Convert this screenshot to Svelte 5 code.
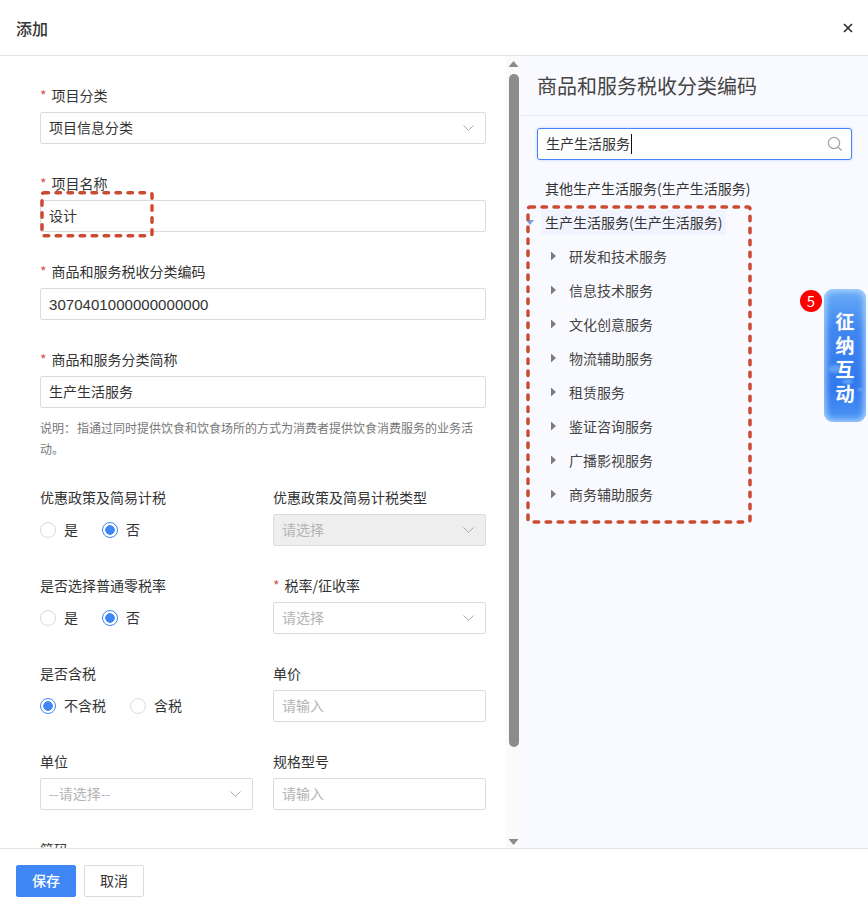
<script>
  const categories = ['研发和技术服务', '信息技术服务', '文化创意服务', '物流辅助服务', '租赁服务', '鉴证咨询服务', '广播影视服务', '商务辅助服务'];
</script>

{#snippet chevron()}
  <svg class="chevron" width="11" height="6" viewBox="0 0 11 6"><path d="M.5 .5 5.500 5.300 10.500 .5" fill="none" stroke="#a8a8a8" stroke-width="1"/></svg>
{/snippet}

{#snippet radio(text, on)}
  <span class="radio-item">
    <span class="radio" class:on></span>
    <span class="radio-text">{text}</span>
  </span>
{/snippet}

<div class="dialog">
  <header class="head">
    <span class="head-title">添加</span>
    <svg class="close" width="10" height="10" viewBox="0 0 10 10"><path d="M1 1 9 9M9 1 1 9" stroke="#222" stroke-width="1.5"/></svg>
  </header>

  <div class="body">
    <div class="form-pane">
      <form class="form">
        <div class="item">
          <div class="label"><i>*</i>项目分类</div>
          <div class="input">项目信息分类{@render chevron()}</div>
        </div>
        <div class="item">
          <div class="label"><i>*</i>项目名称</div>
          <div class="input">设计</div>
        </div>
        <div class="item">
          <div class="label"><i>*</i>商品和服务税收分类编码</div>
          <div class="input digits">3070401000000000000</div>
        </div>
        <div class="item with-help">
          <div class="label"><i>*</i>商品和服务分类简称</div>
          <div class="input">生产生活服务</div>
          <p class="help">说明：<span class="help-body">指通过同时提供饮食和饮食场所的方式为消费者提供饮食消费服务的业务活动。</span></p>
        </div>

        <div class="columns">
          <div class="item">
            <div class="label">优惠政策及简易计税</div>
            <div class="radios">{@render radio('是', false)}{@render radio('否', true)}</div>
          </div>
          <div class="item">
            <div class="label">优惠政策及简易计税类型</div>
            <div class="input disabled placeholder">请选择{@render chevron()}</div>
          </div>
          <div class="item">
            <div class="label">是否选择普通零税率</div>
            <div class="radios">{@render radio('是', false)}{@render radio('否', true)}</div>
          </div>
          <div class="item">
            <div class="label"><i>*</i>税率/征收率</div>
            <div class="input placeholder">请选择{@render chevron()}</div>
          </div>
          <div class="item">
            <div class="label">是否含税</div>
            <div class="radios">{@render radio('不含税', true)}{@render radio('含税', false)}</div>
          </div>
          <div class="item">
            <div class="label">单价</div>
            <div class="input placeholder">请输入</div>
          </div>
          <div class="item">
            <div class="label">单位</div>
            <div class="input placeholder">--请选择--{@render chevron()}</div>
          </div>
          <div class="item">
            <div class="label">规格型号</div>
            <div class="input placeholder">请输入</div>
          </div>
          <div class="item">
            <div class="label">简码</div>
          </div>
        </div>
      </form>
    </div>

    <div class="scrollbar">
      <span class="arrow up"></span>
      <span class="thumb"></span>
      <span class="arrow down"></span>
    </div>

    <aside class="side">
      <h2 class="side-title">商品和服务税收分类编码</h2>
      <div class="side-content">
        <div class="search">
          <span class="search-text">生产生活服务</span><span class="cursor"></span>
          <svg class="search-icon" width="16" height="16" viewBox="0 0 16 16"><circle cx="7" cy="7" r="5.6" fill="none" stroke="#a3a3a3" stroke-width="1.2"/><path d="M11 11 14.6 14.6" stroke="#a3a3a3" stroke-width="1.3"/></svg>
        </div>
        <div class="tree">
          <div class="node top"><span class="node-label">其他生产生活服务(生产生活服务)</span></div>
          <div class="node top">
            <span class="toggle open"></span>
            <span class="node-label active">生产生活服务(生产生活服务)</span>
          </div>
          {#each categories as name}
            <div class="node child"><span class="toggle"></span><span>{name}</span></div>
          {/each}
        </div>
      </div>
    </aside>
  </div>

  <footer class="foot">
    <button class="btn primary" type="button">保存</button>
    <button class="btn" type="button">取消</button>
  </footer>

  <svg class="mark mark-name" width="116" height="48" viewBox="0 0 116 48"><rect x="3" y="2.700" width="110" height="43" rx="2" /></svg>
  <svg class="mark mark-tree" width="228" height="322" viewBox="0 0 228 322"><rect x="3" y="3" width="222" height="315" rx="2" /></svg>

  <div class="widget">
    <span class="badge">5</span>
    <span class="glow g1"></span>
    <span class="glow g2"></span>
    <span class="glow g3"></span>
    <span class="widget-text">征纳互动</span>
  </div>
</div>

<style>
  :global(body) {
    margin: 0;
    background: #fff;
  }
  .dialog {
    position: relative;
    width: 868px;
    height: 913px;
    overflow: hidden;
    display: flex;
    flex-direction: column;
    font-family: "Noto Sans CJK SC", "Noto Sans", sans-serif;
    font-size: 14px;
    color: #333;
  }
  .head {
    height: 55px;
    flex: none;
    display: flex;
    align-items: center;
    justify-content: space-between;
    padding: 0 15px 0 16px;
    border-bottom: 1px solid #e5e5e5;
    box-sizing: content-box;
  }
  .head-title {
    font-size: 16px;
    font-weight: 500;
    color: #333;
  }
  .body {
    flex: 1;
    min-height: 0;
    display: flex;
  }
  .form-pane {
    width: 506px;
    flex: none;
    overflow: hidden;
  }
  .form {
    padding: 29px 20px 0 40px;
  }
  .item {
    margin-bottom: 29px;
  }
  .with-help {
    margin-bottom: 28px;
  }
  .label {
    height: 22px;
    line-height: 20px;
    margin-bottom: 5px;
    color: #333;
    white-space: nowrap;
  }
  .label i {
    font-style: normal;
    color: #d9534f;
    margin-right: 5px;
  }
  .input {
    height: 32px;
    box-sizing: border-box;
    border: 1px solid #dcdcdc;
    border-radius: 2px;
    padding: 0 8px 2px;
    display: flex;
    align-items: center;
    justify-content: space-between;
    color: #333;
    background: #fff;
  }
  .digits {
    font-family: "Liberation Sans", sans-serif;
    font-size: 15px;
    letter-spacing: 0.05px;
    padding-bottom: 0;
  }
  .chevron {
    margin: 2px 3px 0 0;
    flex: none;
  }
  .placeholder {
    color: #b4b4b4;
  }
  .disabled {
    background: #eee;
  }
  .help {
    margin: 9px 0 0;
    font-size: 12px;
    line-height: 21px;
    color: #777;
  }
  .help-body {
    margin-left: 1px;
  }
  .columns {
    display: grid;
    grid-template-columns: 213px 213px;
    column-gap: 20px;
  }
  .radios {
    height: 32px;
    display: flex;
    align-items: center;
    gap: 24px;
  }
  .radio-item {
    display: inline-flex;
    align-items: center;
    gap: 8px;
    color: #333;
  }
  .radio-text {
    padding-bottom: 2px;
  }
  .radio {
    width: 16px;
    height: 16px;
    box-sizing: border-box;
    border: 1px solid #dcdcdc;
    border-radius: 50%;
    background: #fff;
  }
  .radio.on {
    border-color: #3f86f5;
    background: radial-gradient(circle, #3f86f5 0 4.5px, #fff 5px);
  }
  .scrollbar {
    width: 15px;
    flex: none;
    background: #fafafa;
    display: flex;
    flex-direction: column;
    align-items: center;
    padding: 5px 0 3px;
    box-sizing: border-box;
  }
  .arrow {
    width: 10px;
    height: 6px;
    background: #8c8c8c;
    flex: none;
  }
  .arrow.up {
    clip-path: polygon(50% 0, 100% 100%, 0 100%);
  }
  .arrow.down {
    clip-path: polygon(0 0, 100% 0, 50% 100%);
    margin-top: auto;
  }
  .thumb {
    width: 10px;
    height: 673px;
    margin-top: 7px;
    border-radius: 5px;
    background: #8c8c8c;
    flex: none;
  }
  .side {
    flex: 1;
    background: #f9faff;
    min-width: 0;
  }
  .side-title {
    margin: 0;
    height: 59px;
    padding-left: 16px;
    line-height: 59px;
    font-size: 20px;
    font-weight: 400;
    color: #444;
    border-bottom: 1px solid #e5e7ec;
  }
  .side-content {
    padding: 12px 16px 0;
  }
  .search {
    width: 315px;
    height: 32px;
    box-sizing: border-box;
    display: flex;
    align-items: center;
    padding: 0 8px;
    background: #fff;
    border: 1px solid #3f86f5;
    border-radius: 3px;
    box-shadow: 0 0 3px rgba(63, 134, 245, 0.35);
    color: #333;
  }
  .search-text {
    padding-bottom: 2px;
  }
  .cursor {
    width: 1px;
    height: 20px;
    background: #111;
    margin-left: 1px;
  }
  .search-icon {
    margin-left: auto;
  }
  .tree {
    margin-top: 12px;
  }
  .node {
    height: 34px;
    box-sizing: border-box;
    padding-bottom: 2px;
    display: flex;
    align-items: center;
    color: #333;
    position: relative;
  }
  .top .node-label {
    margin-left: 8px;
    white-space: nowrap;
  }
  .top .node-label.active {
    background: #f1f3fe;
    margin-left: 4px;
    padding: 0 4px;
    line-height: 25px;
  }
  .child {
    padding-left: 14px;
    gap: 13px;
    color: #444;
  }
  .toggle {
    width: 5px;
    height: 9px;
    flex: none;
    background: #7c7c7c;
    clip-path: polygon(0 0, 100% 50%, 0 100%);
  }
  .toggle.open {
    position: absolute;
    left: -11px;
    top: 14px;
    width: 8px;
    height: 5px;
    background: #7f9fdc;
    clip-path: polygon(0 0, 100% 0, 50% 100%);
  }
  .foot {
    flex: none;
    height: 64px;
    border-top: 1px solid #e5e5e5;
    display: flex;
    align-items: center;
    gap: 8px;
    padding-left: 16px;
  }
  .btn {
    width: 60px;
    height: 32px;
    font: inherit;
    color: #333;
    background: #fff;
    border: 1px solid #dcdcdc;
    border-radius: 2px;
    padding: 0 0 2px;
  }
  .btn.primary {
    background: #4087f6;
    border-color: #4087f6;
    color: #fff;
    font-weight: 500;
  }
  .mark {
    position: absolute;
    pointer-events: none;
  }
  .mark rect {
    fill: none;
    stroke: #cd4a32;
    stroke-width: 3.5;
    stroke-linejoin: round;
    stroke-linecap: round;
    stroke-dasharray: 4.500 7.500;
  }
  .mark-name {
    left: 39px;
    top: 190px;
  }
  .mark-tree {
    left: 525px;
    top: 204px;
  }
  .widget {
    position: absolute;
    left: 824px;
    top: 289px;
    width: 42px;
    height: 133px;
    box-sizing: border-box;
    border-radius: 9px;
    background: linear-gradient(180deg, #6badf6 0%, #3f86ef 30%, #2f78ee 75%, #4f97f4 100%);
    box-shadow: inset 0 0 6px 2px rgba(190, 222, 255, 0.85);
  }
  .widget-text {
    position: absolute;
    left: 0;
    top: 20px;
    width: 100%;
    text-align: center;
    color: #fff;
    font-size: 19px;
    font-weight: 500;
    line-height: 24px;
    padding: 0 11px;
    box-sizing: border-box;
    word-break: break-all;
    text-shadow: 0 0 1px #fff;
  }
  .glow {
    position: absolute;
    border-radius: 50%;
    background: rgba(170, 210, 255, 0.4);
    filter: blur(1px);
  }
  .g1 {
    left: 5px;
    top: 76px;
    width: 12px;
    height: 8px;
  }
  .g2 {
    left: 18px;
    top: 90px;
    width: 11px;
    height: 5px;
  }
  .g3 {
    left: 33px;
    top: 99px;
    width: 6px;
    height: 3px;
  }
  .badge {
    position: absolute;
    left: -24px;
    top: 1px;
    width: 22px;
    height: 22px;
    border-radius: 50%;
    background: #f00;
    color: #fff;
    font-size: 15px;
    line-height: 21px;
    text-align: center;
  }
</style>
